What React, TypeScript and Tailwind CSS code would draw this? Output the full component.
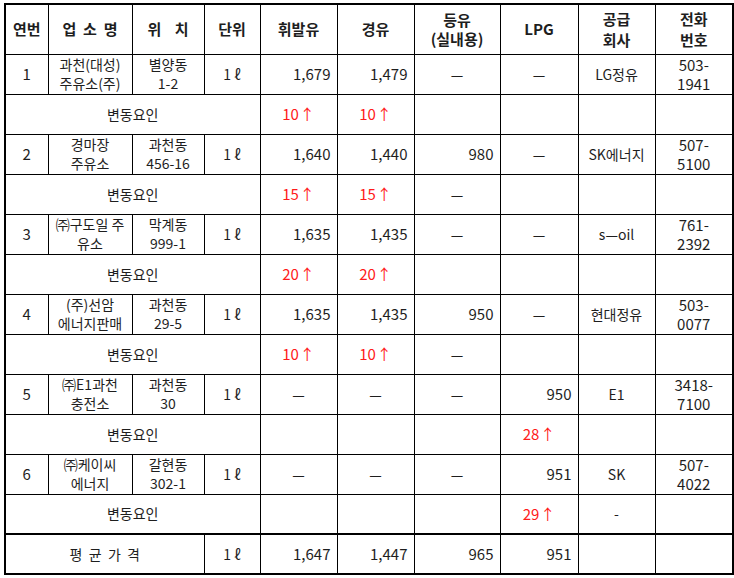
const font = {
  fontFamily: '"Noto Sans CJK KR", "Noto Sans", sans-serif',
}

type Change = { gas?: string; diesel?: string; kero?: string; lpg?: string; co?: string }

type Station = {
  no: string
  name: string[]
  loc: string[]
  gas: string
  diesel: string
  kero: string
  lpg: string
  co: string
  tel: string[]
  chg: Change
}

const stations: Station[] = [
  {
    no: "1",
    name: ["과천(대성)", "주유소(주)"],
    loc: ["별양동", "1-2"],
    gas: "1,679",
    diesel: "1,479",
    kero: "—",
    lpg: "—",
    co: "LG정유",
    tel: ["503-", "1941"],
    chg: { gas: "10", diesel: "10" },
  },
  {
    no: "2",
    name: ["경마장", "주유소"],
    loc: ["과천동", "456-16"],
    gas: "1,640",
    diesel: "1,440",
    kero: "980",
    lpg: "—",
    co: "SK에너지",
    tel: ["507-", "5100"],
    chg: { gas: "15", diesel: "15", kero: "—" },
  },
  {
    no: "3",
    name: ["㈜구도일 주", "유소"],
    loc: ["막계동", "999-1"],
    gas: "1,635",
    diesel: "1,435",
    kero: "—",
    lpg: "—",
    co: "s—oil",
    tel: ["761-", "2392"],
    chg: { gas: "20", diesel: "20" },
  },
  {
    no: "4",
    name: ["(주)선암", "에너지판매"],
    loc: ["과천동", "29-5"],
    gas: "1,635",
    diesel: "1,435",
    kero: "950",
    lpg: "—",
    co: "현대정유",
    tel: ["503-", "0077"],
    chg: { gas: "10", diesel: "10", kero: "—" },
  },
  {
    no: "5",
    name: ["㈜E1과천", "충전소"],
    loc: ["과천동", "30"],
    gas: "—",
    diesel: "—",
    kero: "—",
    lpg: "950",
    co: "E1",
    tel: ["3418-", "7100"],
    chg: { lpg: "28" },
  },
  {
    no: "6",
    name: ["㈜케이씨", "에너지"],
    loc: ["갈현동", "302-1"],
    gas: "—",
    diesel: "—",
    kero: "—",
    lpg: "951",
    co: "SK",
    tel: ["507-", "4022"],
    chg: { lpg: "29", co: "-" },
  },
]

const cell = "border border-black p-0 align-middle"

function Lines({ lines, lh = "leading-[19px]" }: { lines: string[]; lh?: string }) {
  return (
    <div className={lh}>
      {lines.map((l, i) => (
        <div key={i}>{l}</div>
      ))}
    </div>
  )
}

function Price({ v }: { v: string }) {
  const isDash = v === "—"
  return (
    <td className={`${cell} ${isDash ? "text-center" : "text-right pr-[6px] text-[15px]"}`}>{v}</td>
  )
}

function Up({ v }: { v?: string }) {
  if (!v) return <td className={cell}></td>
  if (v === "—" || v === "-") return <td className={`${cell} text-center`}>{v}</td>
  return (
    <td className={`${cell} text-center text-[15px] text-[#ff1a1a]`}>
      {v}
      <span className="ml-[1px]">↑</span>
    </td>
  )
}

export default function App() {
  return (
    <div className="w-[734px] h-[578px] bg-white pl-[4px] pt-[3px] text-[14px] text-[#1e1e1e]" style={font}>
      <table className="border-collapse border-2 border-black table-fixed w-[728px]">
        <colgroup>
          <col className="w-[43px]" />
          <col className="w-[84px]" />
          <col className="w-[72px]" />
          <col className="w-[56px]" />
          <col className="w-[77px]" />
          <col className="w-[77px]" />
          <col className="w-[86px]" />
          <col className="w-[78px]" />
          <col className="w-[77px]" />
          <col className="w-[78px]" />
        </colgroup>
        <thead>
          <tr className="h-[50px] text-[15px] font-bold text-center">
            <th className={cell}>연번</th>
            <th className={`${cell} whitespace-pre`}>업  소  명</th>
            <th className={`${cell} whitespace-pre`}>위    치</th>
            <th className={cell}>단위</th>
            <th className={cell}>휘발유</th>
            <th className={cell}>경유</th>
            <th className={cell}>
              <Lines lines={["등유", "(실내용)"]} lh="leading-[19px]" />
            </th>
            <th className={`${cell} font-semibold`}>LPG</th>
            <th className={cell}>
              <Lines lines={["공급", "회사"]} lh="leading-[21px]" />
            </th>
            <th className={cell}>
              <Lines lines={["전화", "번호"]} lh="leading-[21px]" />
            </th>
          </tr>
        </thead>
        <tbody>
          {stations.map((s) => (
            <Rows key={s.no} s={s} />
          ))}
          <tr className="h-[40px]">
            <td colSpan={3} className={`${cell} border-t-2 text-center whitespace-pre`}>
              평  균  가  격
            </td>
            <td className={`${cell} border-t-2 text-center whitespace-pre`}>1 ℓ</td>
            <td className={`${cell} border-t-2 text-right pr-[6px] text-[15px]`}>1,647</td>
            <td className={`${cell} border-t-2 text-right pr-[6px] text-[15px]`}>1,447</td>
            <td className={`${cell} border-t-2 text-right pr-[6px] text-[15px]`}>965</td>
            <td className={`${cell} border-t-2 text-right pr-[6px] text-[15px]`}>951</td>
            <td className={`${cell} border-t-2`}></td>
            <td className={`${cell} border-t-2`}></td>
          </tr>
        </tbody>
      </table>
    </div>
  )
}

function Rows({ s }: { s: Station }) {
  return (
    <>
      <tr className="h-[40px]">
        <td className={`${cell} text-center text-[15px]`}>{s.no}</td>
        <td className={`${cell} text-center`}>
          <Lines lines={s.name} />
        </td>
        <td className={`${cell} text-center`}>
          <Lines lines={s.loc} />
        </td>
        <td className={`${cell} text-center whitespace-pre`}>1 ℓ</td>
        <Price v={s.gas} />
        <Price v={s.diesel} />
        <Price v={s.kero} />
        <Price v={s.lpg} />
        <td className={`${cell} text-center`}>{s.co}</td>
        <td className={`${cell} text-center text-[15px]`}>
          <Lines lines={s.tel} />
        </td>
      </tr>
      <tr className="h-[40px]">
        <td colSpan={4} className={`${cell} text-center`}>
          변동요인
        </td>
        <Up v={s.chg.gas} />
        <Up v={s.chg.diesel} />
        <Up v={s.chg.kero} />
        <Up v={s.chg.lpg} />
        <Up v={s.chg.co} />
        <td className={cell}></td>
      </tr>
    </>
  )
}
